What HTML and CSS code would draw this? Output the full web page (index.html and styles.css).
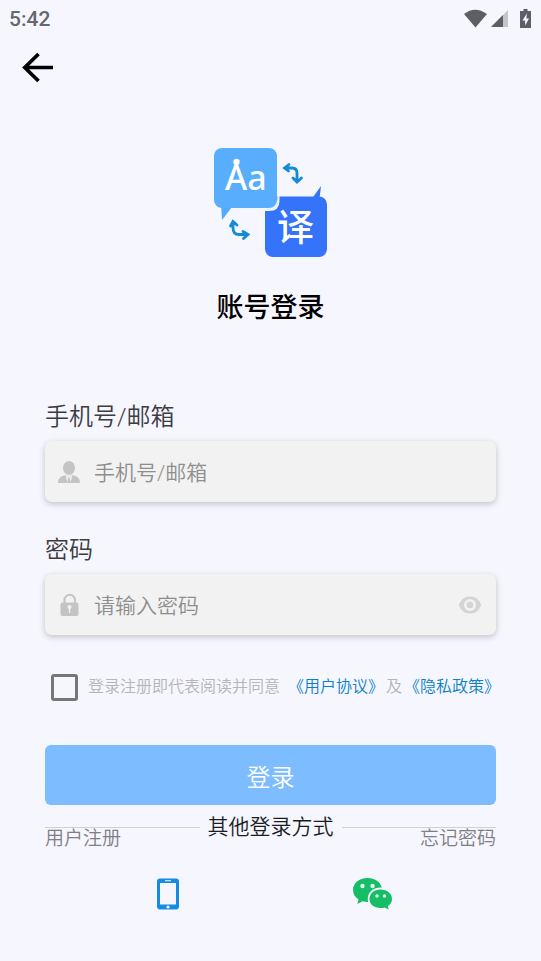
FILE: index.html
```html
<!DOCTYPE html>
<html lang="zh-CN">
<head>
  <meta charset="utf-8">
  <meta name="viewport" content="width=device-width, initial-scale=1">
  <title>账号登录</title>
  <link rel="stylesheet" href="styles.css">
</head>
<body>
  <div class="status-bar">
    <span class="clock">5:42</span>
    <svg class="status-icons" width="70" height="20" viewBox="0 0 70 20" aria-hidden="true">
      <path d="M0 5Q11-3.500 23 5L11.500 18.500Z" fill="#5e5e66"/>
      <path d="M44 1V18H27Z" fill="#c4c4cd"/>
      <path d="M39 6V18H27Z" fill="#5e5e66"/>
      <path d="M59.500 0h4v2H67v17H56V2h3.500Z" fill="#5e5e66"/>
      <path d="M62.800 4.500L58.500 11.500h2.600v5L65 9.500h-2.600Z" fill="#f6f6ff"/>
    </svg>
  </div>

  <header class="app-bar">
    <button class="icon-button" type="button" aria-label="返回">
      <svg width="32" height="32" viewBox="0 0 32 32" aria-hidden="true">
        <path d="M31 15.500H4M16.500 2L2.800 15.500L16.500 29" fill="none" stroke="#000" stroke-width="3.700"/>
      </svg>
    </button>
  </header>

  <main class="login">
    <svg class="logo" width="114" height="112" viewBox="0 0 114 112" aria-hidden="true">
      <path d="M7 56L8 73L18 60Z" fill="#54aafa"/>
      <rect x="0" y="1" width="63" height="60" rx="8" fill="#58aefc"/>
      <path d="M97 53L107 39L105 56Z" fill="#3573f5"/>
      <path d="M63 49.500H105a8 8 0 0 1 8 8V102a8 8 0 0 1-8 8H59a8 8 0 0 1-8-8V63H56Q64 63 64 55Z" fill="#3573fa"/>
      <path d="M51 63H55Q64.500 63 64.500 54V49" fill="none" stroke="#e8f4ff" stroke-width="2"/>
      <text class="logo-latin" x="11" y="43">Aa</text>
      <circle cx="22.500" cy="15" r="3.200" fill="#fff"/>
      <text class="logo-han" x="63" y="94">译</text>
      <g fill="none" stroke="#138bd8" stroke-width="2.800" stroke-linecap="round" stroke-linejoin="miter">
        <path d="M71 21H78Q83 21 83 26V34M75 17.500L70.500 21L74.500 24M79 31L83 35L87.500 31"/>
        <path d="M19 75V81Q19 87.500 25 87.500H32M16.500 79L19 74.500L23 78M29 84.500L34 87.500L29.500 91.500"/>
      </g>
    </svg>
    <h1 class="title">账号登录</h1>

    <form class="form">
      <label class="field-label" for="account">手机号/邮箱</label>
      <div class="field">
        <svg width="24" height="24" viewBox="0 0 24 24" aria-hidden="true">
          <ellipse cx="12" cy="8" rx="6" ry="7" fill="#c4c4c4"/>
          <path d="M1 23Q1 16 9 15L12 17.500L15 15Q23 16 23 23Z" fill="#c4c4c4"/>
          <path d="M8.500 15L10.500 22.500L11.500 18.500H12.500L13.500 22.500L15.500 15L12 17.500Z" fill="#f2f2f2"/>
          <path d="M11.500 17.500h1l1.200 5h-3.400Z" fill="#c4c4c4"/>
        </svg>
        <input class="field-input" id="account" type="text" placeholder="手机号/邮箱">
      </div>

      <label class="field-label" for="password">密码</label>
      <div class="field">
        <svg width="24" height="24" viewBox="0 0 24 24" aria-hidden="true">
          <path d="M7.500 11V7a5.200 5.200 0 0 1 10.400 0v4" fill="none" stroke="#c4c4c4" stroke-width="2"/>
          <rect x="3.500" y="9.500" width="18" height="13.500" rx="2" fill="#c4c4c4"/>
          <circle cx="12.500" cy="14" r="2" fill="#f2f2f2"/>
          <path d="M11.800 15h1.400v5h-1.400Z" fill="#f2f2f2"/>
        </svg>
        <input class="field-input" id="password" type="password" placeholder="请输入密码">
        <button class="icon-button" type="button" aria-label="显示密码">
          <svg width="24" height="24" viewBox="0 0 24 24" aria-hidden="true">
            <path d="M.800 12C3 6 7 3.500 12 3.500S21 6 23.200 12C21 18 17 20.500 12 20.500S3 18 .800 12Z" fill="#d4d4d4"/>
            <circle cx="12" cy="12" r="6" fill="#f2f2f2"/>
            <circle cx="12" cy="12" r="3.300" fill="#d4d4d4"/>
          </svg>
        </button>
      </div>

      <div class="terms">
        <input class="checkbox" id="agree" type="checkbox">
        <label class="terms-label" for="agree">登录注册即代表阅读并同意</label>
        <a class="terms-link" href="#agreement">《用户协议》</a>
        <span>及</span>
        <a class="terms-link" href="#privacy">《隐私政策》</a>
      </div>

      <button class="submit" type="submit">登录</button>
    </form>

    <div class="alternatives">
      <div class="divider">其他登录方式</div>
      <nav class="account-links">
        <a href="#register">用户注册</a>
        <a href="#forgot">忘记密码</a>
      </nav>
    </div>

    <div class="providers">
      <button class="icon-button" type="button" aria-label="手机登录">
        <svg width="42" height="34" viewBox="0 0 42 34" aria-hidden="true">
          <rect x="10" y="1.500" width="22" height="31" rx="3" fill="#168be6"/>
          <rect x="13" y="6" width="16" height="21.500" fill="#f6f6ff"/>
          <path d="M18 3.700h6" stroke="#d8edff" stroke-width="1.200"/>
          <circle cx="21" cy="30" r="1.600" fill="#f6f6ff"/>
        </svg>
      </button>
      <button class="icon-button" type="button" aria-label="微信登录">
        <svg width="42" height="34" viewBox="0 0 42 34" aria-hidden="true">
          <path d="M15.500 1C7 1 1 6.500 1 13c0 4 2 7 5.500 9.500L5.300 27l5.200-2.700q2.500.700 5 .700C24 25 30 20 30 13S24 1 15.500 1Z" fill="#15bd65"/>
          <ellipse cx="28.500" cy="21.800" rx="12.800" ry="11.300" fill="#f6f6ff"/>
          <path d="M28.500 12.500C22 12.500 17.500 16.500 17.500 22S22 31 28.500 31q2 0 4-.600l4.300 2.200-1-3.700C38.500 27.500 40 25 40 22c0-5.500-5-9.500-11.500-9.500Z" fill="#15bd65"/>
          <g fill="#e6fff0">
            <circle cx="10.500" cy="9" r="2.200"/>
            <circle cx="20.500" cy="9" r="2.200"/>
            <circle cx="25" cy="19" r="1.700"/>
            <circle cx="32.500" cy="19" r="1.700"/>
          </g>
        </svg>
      </button>
    </div>
  </main>
</body>
</html>
```

FILE: styles.css
```css
* {
  box-sizing: border-box;
}

body {
  margin: 0;
  background: #f6f6ff;
  color: #1c1c22;
  font-family: Roboto, "Noto Sans CJK SC", sans-serif;
  font-weight: 350;
}

button,
input {
  font: inherit;
}

a {
  color: inherit;
  text-decoration: none;
}

svg {
  display: block;
  flex: none;
}

.status-bar {
  display: flex;
  align-items: center;
  justify-content: space-between;
  height: 38px;
  padding: 0 7px 0 9px;
}

.clock {
  color: #66666e;
  font-size: 21px;
  font-weight: 500;
}

.app-bar {
  display: flex;
  align-items: center;
  height: 60px;
  padding: 0 22px;
}

.icon-button {
  padding: 0;
  border: 0;
  background: none;
  cursor: pointer;
}

.login {
  padding: 49px 45px 24px;
}

.logo {
  margin: 0 auto;
}

.logo-latin {
  fill: #fff;
  font-family: "Noto Sans", sans-serif;
  font-size: 34px;
  font-weight: 500;
}

.logo-han {
  fill: #fff;
  font-family: "Noto Sans CJK SC", sans-serif;
  font-size: 37px;
  font-weight: 500;
}

.title {
  margin: 33px 0 77px;
  color: #000;
  font-size: 27px;
  font-weight: 500;
  line-height: 32px;
  text-align: center;
}

.field-label {
  display: block;
  margin-bottom: 8px;
  color: #3c3c42;
  font-size: 24px;
  line-height: 32px;
}

.field {
  display: flex;
  align-items: center;
  gap: 12px;
  height: 61px;
  margin-bottom: 32px;
  padding: 0 14px 0 12px;
  border-radius: 7px;
  background: #f2f2f2;
  box-shadow: 0 2px 6px rgba(0, 0, 0, 0.22);
}

.field-input {
  flex: 1;
  min-width: 0;
  padding: 2px 1px 0;
  border: 0;
  outline: 0;
  background: none;
  color: #3c3c42;
  font-size: 21px;
  line-height: 32px;
}

.field-input::placeholder {
  color: #8e8e8e;
  opacity: 1;
}

.terms {
  display: flex;
  align-items: center;
  gap: 2px;
  margin: 38px 0 44px;
  padding-left: 6px;
  color: #b4b4ba;
  font-size: 16px;
  line-height: 28px;
  white-space: nowrap;
}

.checkbox {
  flex: none;
  width: 27px;
  height: 27px;
  margin: 0 8px 0 0;
  border: 3px solid #77777b;
  border-radius: 3px;
  appearance: none;
}

.checkbox:checked {
  background: #77777b;
}

.terms-label {
  margin-right: 6px;
}

.terms-link {
  color: #0a80c8;
}

.submit {
  display: block;
  width: 100%;
  height: 60px;
  border: 0;
  border-radius: 6px;
  background: #7cbcff;
  color: #fff;
  font-size: 24px;
  cursor: pointer;
}

.alternatives {
  display: grid;
  margin-top: 6px;
}

.divider,
.account-links {
  grid-area: 1 / 1;
  line-height: 32px;
}

.divider {
  display: flex;
  align-items: center;
  gap: 8px;
  align-self: start;
  font-size: 21px;
}

.divider::before,
.divider::after {
  content: "";
  flex: 1;
  height: 1px;
  background: #d0d0da;
}

.account-links {
  display: flex;
  justify-content: space-between;
  padding-top: 12px;
  color: #7e7e84;
  font-size: 19px;
}

.providers {
  display: flex;
  justify-content: space-around;
  margin-top: 22px;
  padding: 0 20px;
}
```
